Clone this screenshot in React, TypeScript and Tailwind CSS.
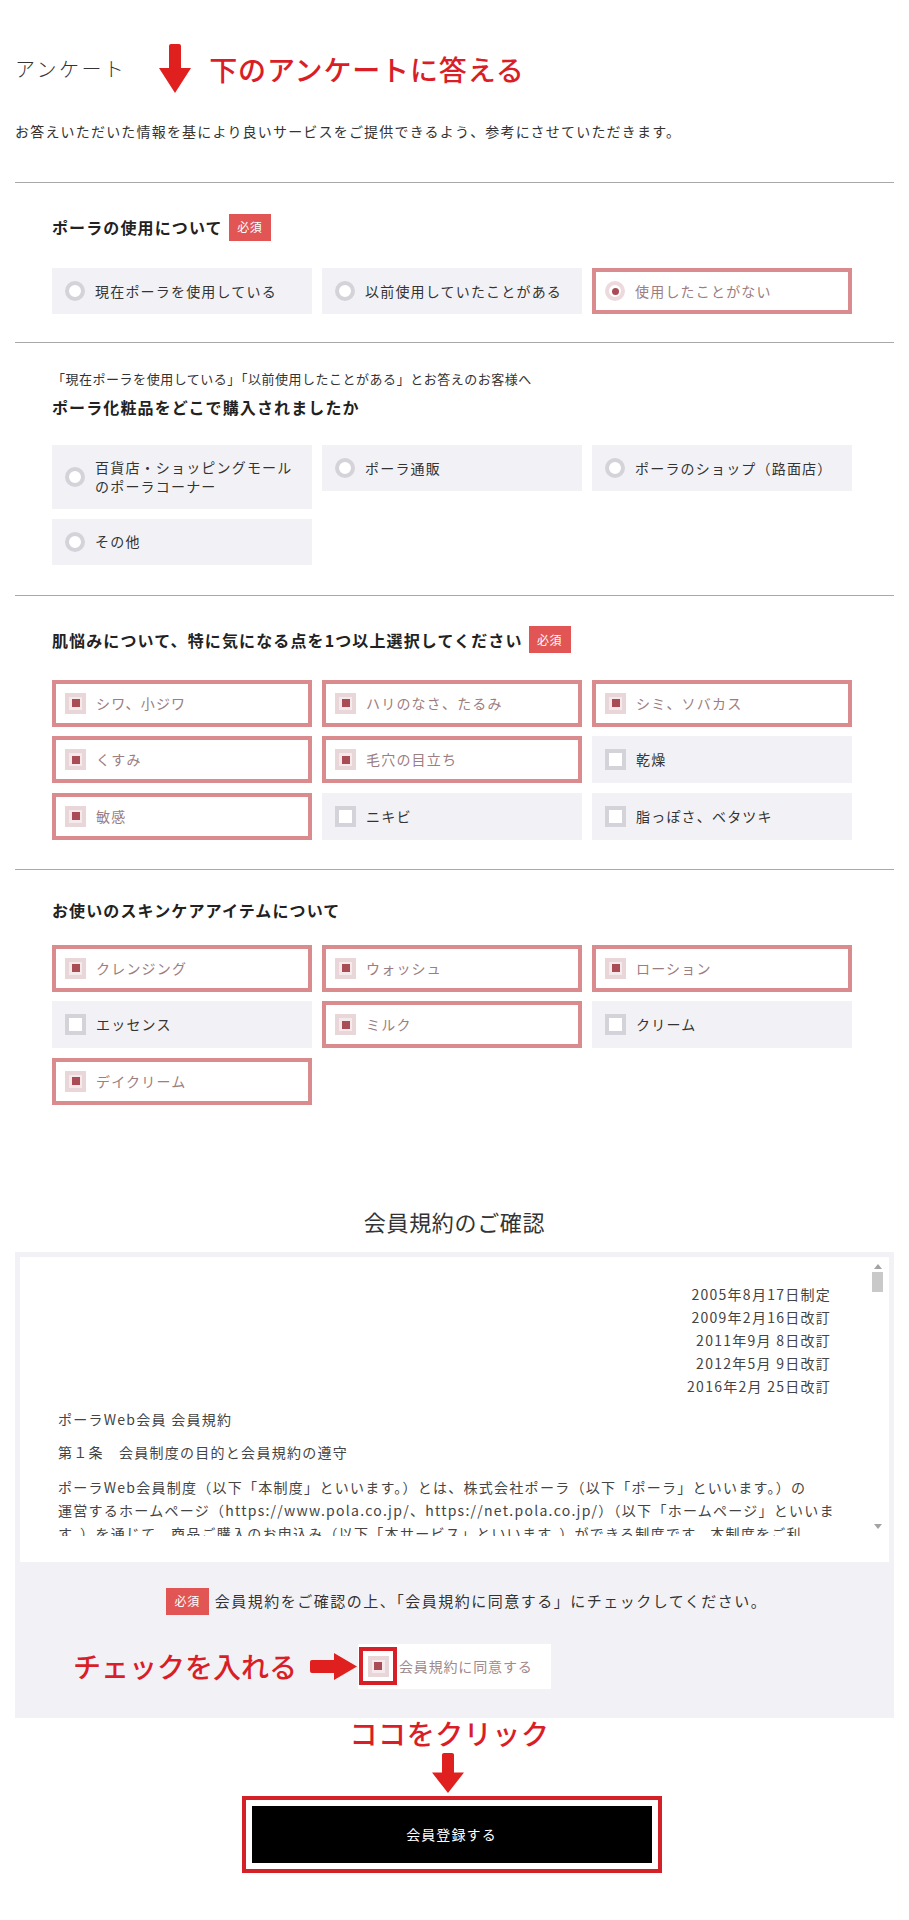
type Item = { label: string; checked?: boolean };

const usage: Item[] = [
  { label: "現在ポーラを使用している" },
  { label: "以前使用していたことがある" },
  { label: "使用したことがない", checked: true },
];

const shops: Item[] = [
  { label: "百貨店・ショッピングモール\nのポーラコーナー" },
  { label: "ポーラ通販" },
  { label: "ポーラのショップ（路面店）" },
  { label: "その他" },
];

const skin: Item[] = [
  { label: "シワ、小ジワ", checked: true },
  { label: "ハリのなさ、たるみ", checked: true },
  { label: "シミ、ソバカス", checked: true },
  { label: "くすみ", checked: true },
  { label: "毛穴の目立ち", checked: true },
  { label: "乾燥" },
  { label: "敏感", checked: true },
  { label: "ニキビ" },
  { label: "脂っぽさ、ベタツキ" },
];

const items: Item[] = [
  { label: "クレンジング", checked: true },
  { label: "ウォッシュ", checked: true },
  { label: "ローション", checked: true },
  { label: "エッセンス" },
  { label: "ミルク", checked: true },
  { label: "クリーム" },
  { label: "デイクリーム", checked: true },
];

function Radio({ checked }: { checked?: boolean }) {
  return (
    <span
      className={`flex h-[20px] w-[20px] shrink-0 items-center justify-center rounded-full border-4 bg-white ${
        checked ? "border-[#ecdadd]" : "border-[#d3d3d9]"
      }`}
    >
      {checked && <span className="h-[7px] w-[7px] rounded-full bg-[#a94c56]" />}
    </span>
  );
}

function Check({ checked }: { checked?: boolean }) {
  return (
    <span
      className={`flex h-[21px] w-[21px] shrink-0 items-center justify-center border-4 ${
        checked ? "border-[#e9d6d9] bg-[#f4eaeb]" : "border-[#d3d3d9] bg-white"
      }`}
    >
      {checked && <span className="h-[8px] w-[8px] bg-[#a94c56]" />}
    </span>
  );
}

function Option({ item, kind }: { item: Item; kind: "radio" | "check" }) {
  return (
    <div
      className={`flex min-h-[45px] items-center gap-[10px] border-4 py-[9px] pl-[9px] pr-[12px] text-[14px] leading-[19px] tracking-[0.085em] ${
        item.checked
          ? "border-[#d98b8d] bg-white text-[#9c7d80]"
          : "border-transparent bg-[#f2f2f6] text-[#333]"
      }`}
    >
      {kind === "radio" ? <Radio checked={item.checked} /> : <Check checked={item.checked} />}
      <span>
        {item.label.split("\n").map((l, i) => (
          <span key={i} className="block">
            {l}
          </span>
        ))}
      </span>
    </div>
  );
}

function Required({ wide }: { wide?: boolean }) {
  return (
    <span
      className={`flex h-[27px] shrink-0 items-center justify-center bg-[#e15654] text-[12px] tracking-[0.05em] text-white ${
        wide ? "w-[43px]" : "w-[42px]"
      }`}
    >
      必須
    </span>
  );
}

function Heading({ children, required }: { children: React.ReactNode; required?: boolean }) {
  return (
    <div className="flex h-[28px] items-center">
      <h3 className="text-[16px] font-bold leading-[24px] tracking-[0.07em] text-[#222]">{children}</h3>
      {required && (
        <span className="ml-[6px]">
          <Required />
        </span>
      )}
    </div>
  );
}

function Options({ list, kind, className }: { list: Item[]; kind: "radio" | "check"; className: string }) {
  return (
    <div className={`grid grid-cols-[260px_260px_260px] items-start gap-x-[10px] gap-y-[9.5px] ${className}`}>
      {list.map((it) => (
        <Option key={it.label} item={it} kind={kind} />
      ))}
    </div>
  );
}

function DownArrow({ className }: { className: string }) {
  return (
    <svg viewBox="0 0 32 49" className={className} preserveAspectRatio="none">
      <path d="M10 2 Q10 0 12 0 H20 Q22 0 22 2 V24 H32 L16 49 L0 24 H10 Z" fill="#e0201f" />
    </svg>
  );
}

function RightArrow() {
  return (
    <svg viewBox="0 0 47 27" className="h-[27px] w-[47px]">
      <path d="M2 7 H24 V0 L47 13.5 L24 27 V20 H2 Q0 20 0 18 V9 Q0 7 2 7 Z" fill="#e0201f" />
    </svg>
  );
}

export default function App() {
  return (
    <div className="min-h-[1920px] w-[909px] bg-white px-[15px] pt-[44px] pb-[48px] font-['Noto_Sans_CJK_JP',sans-serif] text-[#333]">
      {/* header */}
      <div className="flex h-[49px] items-center">
        <span className="text-[20px] font-light leading-[28px] tracking-[0.12em] text-[#333]">アンケート</span>
        <DownArrow className="ml-[33px] h-[49px] w-[32px]" />
        <span className="ml-[18px] text-[28px] font-medium leading-[36px] tracking-[0.03em] text-[#d91e27]">
          下のアンケートに答える
        </span>
      </div>
      <p className="mt-[28px] text-[14px] leading-[20px] tracking-[0.085em]">
        お答えいただいた情報を基により良いサービスをご提供できるよう、参考にさせていただきます。
      </p>

      <div className="mt-[41px]">
        <section className="border-t border-[#a9a9a9] pt-[30px] pb-[28px] pl-[37px]">
          <Heading required>ポーラの使用について</Heading>
          <Options list={usage} kind="radio" className="mt-[27px]" />
        </section>

        <section className="border-t border-[#a9a9a9] pt-[26px] pb-[30px] pl-[37px]">
          <p className="text-[13px] leading-[20px] tracking-[0.04em]">
            「現在ポーラを使用している」「以前使用したことがある」とお答えのお客様へ
          </p>
          <div className="mt-[4px]">
            <Heading>ポーラ化粧品をどこで購入されましたか</Heading>
          </div>
          <Options list={shops} kind="radio" className="mt-[24px]" />
        </section>

        <section className="border-t border-[#a9a9a9] pt-[30px] pb-[29px] pl-[37px]">
          <Heading required>肌悩みについて、特に気になる点を1つ以上選択してください</Heading>
          <Options list={skin} kind="check" className="mt-[26px]" />
        </section>

        <section className="border-t border-[#a9a9a9] pt-[26px] pl-[37px]">
          <Heading>お使いのスキンケアアイテムについて</Heading>
          <Options list={items} kind="check" className="mt-[21px]" />
        </section>
      </div>

      {/* terms */}
      <h2 className="mt-[100px] text-center text-[22px] leading-[32px] tracking-[0.03em] text-[#333]">会員規約のご確認</h2>
      <div className="mt-[15px] bg-[#f2f2f6] px-[5px] pt-[5px] pb-[29px]">
        <div className="bg-white pb-[26px]">
          <div className="flex h-[279px]">
            <div className="flex-1 overflow-hidden pt-[26px] pr-[40px] pl-[38px] text-[14px] leading-[23px] tracking-[0.09em] text-[#444]">
              <div className="text-right">
                <p>2005年8月17日制定</p>
                <p>2009年2月16日改訂</p>
                <p>2011年9月 8日改訂</p>
                <p>2012年5月 9日改訂</p>
                <p>2016年2月 25日改訂</p>
              </div>
              <p className="mt-[10px]">ポーラWeb会員 会員規約</p>
              <p className="mt-[10px]">第１条　会員制度の目的と会員規約の遵守</p>
              <div className="mt-[12px] whitespace-nowrap">
                <p>ポーラWeb会員制度（以下「本制度」といいます。）とは、株式会社ポーラ（以下「ポーラ」といいます。）の</p>
                <p>運営するホームページ（https://www.pola.co.jp/、https://net.pola.co.jp/）（以下「ホームページ」といいま</p>
                <p>す。）を通じて、商品ご購入のお申込み（以下「本サービス」といいます。）ができる制度です。本制度をご利</p>
                <p>用いただくには、本規約に同意のうえ、ポーラWeb会員としてご登録いただく必要があります。</p>
              </div>
            </div>
            <div className="mr-[5px] flex w-[13px] flex-col items-center pt-[7px] pb-[7px]">
              <span className="h-0 w-0 border-x-[4px] border-b-[5px] border-x-transparent border-b-[#a3a3a3]" />
              <span className="mt-[3px] h-[20px] w-[11px] bg-[#c9c9c9]" />
              <span className="flex-1" />
              <span className="h-0 w-0 border-x-[4px] border-t-[5px] border-x-transparent border-t-[#a3a3a3]" />
            </div>
          </div>
        </div>

        <div className="mt-[26px] flex items-center justify-center gap-[6px] pl-[24px]">
          <Required wide />
          <span className="text-[15px] leading-[20px] tracking-[0.1em] text-[#333]">
            会員規約をご確認の上、「会員規約に同意する」にチェックしてください。
          </span>
        </div>

        <div className="mt-[29px] grid grid-cols-[1fr_auto_1fr] items-center">
          <div className="flex items-center justify-end">
            <span className="text-[28px] font-medium leading-[36px] text-[#d91e27]">チェックを入れる</span>
            <span className="mr-[1px] ml-[13px] flex">
              <RightArrow />
            </span>
          </div>
          <div className="flex h-[45px] w-[193px] items-center bg-white">
            <span className="ml-[1px] flex h-[38px] w-[38px] items-center justify-center border-4 border-[#d71f28]">
              <Check checked />
            </span>
            <span className="ml-[2px] text-[14px] leading-[20px] tracking-[0.06em] text-[#9e8a8c]">会員規約に同意する</span>
          </div>
          <div />
        </div>
      </div>

      {/* submit */}
      <div className="flex flex-col items-center">
        <span className="mr-[10px] text-[28px] font-medium leading-[30px] tracking-[0.02em] text-[#d91e27]">
          ココをクリック
        </span>
        <DownArrow className="mt-[5px] mr-[14px] h-[40px] w-[32px]" />
        <div className="mt-[3px] mr-[6px] w-[420px] border-4 border-[#d42027] p-[6px]">
          <button className="flex h-[57px] w-full items-center justify-center bg-black text-[14px] tracking-[0.08em] text-white">
            会員登録する
          </button>
        </div>
      </div>
    </div>
  );
}
